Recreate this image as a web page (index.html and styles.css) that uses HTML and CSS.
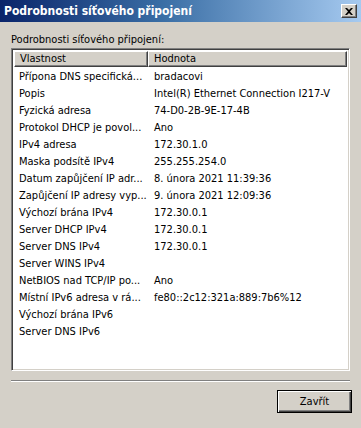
FILE: index.html
```html
<!DOCTYPE html>
<html lang="cs">

<head>
    <meta charset="UTF-8">
    <meta name="viewport" content="width=device-width, initial-scale=1.0">
    <title>Podrobnosti síťového připojení</title>
    <link rel="stylesheet" href="styles.css">
</head>

<body>
    <div class="window">
        <div class="titlebar">
            <span class="title">Podrobnosti síťového připojení</span>
            <span class="close-btn">
                <svg width="8" height="7" viewBox="0 0 8 7">
                    <path d="M0 0h2l2 2 2-2h2L5 3.5 8 7H6L4 5 2 7H0l3-3.5z" fill="#000"/>
                </svg>
            </span>
        </div>

        <div class="content">
            <div class="caption">Podrobnosti síťového připojení:</div>

            <div class="listbox">
                <div class="list-header">
                    <div class="col-head col-prop">Vlastnost</div>
                    <div class="col-head col-value">Hodnota</div>
                </div>
                <div class="list-body">
                    <div class="row"><span class="prop">Přípona DNS specifická...</span><span class="val">bradacovi</span></div>
                    <div class="row"><span class="prop">Popis</span><span class="val">Intel(R) Ethernet Connection I217-V</span></div>
                    <div class="row"><span class="prop">Fyzická adresa</span><span class="val">74-D0-2B-9E-17-4B</span></div>
                    <div class="row"><span class="prop">Protokol DHCP je povol...</span><span class="val">Ano</span></div>
                    <div class="row"><span class="prop">IPv4 adresa</span><span class="val">172.30.1.0</span></div>
                    <div class="row"><span class="prop">Maska podsítě IPv4</span><span class="val">255.255.254.0</span></div>
                    <div class="row"><span class="prop">Datum zapůjčení IP adr...</span><span class="val">8. února 2021 11:39:36</span></div>
                    <div class="row"><span class="prop">Zapůjčení IP adresy vyp...</span><span class="val">9. února 2021 12:09:36</span></div>
                    <div class="row"><span class="prop">Výchozí brána IPv4</span><span class="val">172.30.0.1</span></div>
                    <div class="row"><span class="prop">Server DHCP IPv4</span><span class="val">172.30.0.1</span></div>
                    <div class="row"><span class="prop">Server DNS IPv4</span><span class="val">172.30.0.1</span></div>
                    <div class="row"><span class="prop">Server WINS IPv4</span><span class="val"></span></div>
                    <div class="row"><span class="prop">NetBIOS nad TCP/IP po...</span><span class="val">Ano</span></div>
                    <div class="row"><span class="prop">Místní IPv6 adresa v rá...</span><span class="val">fe80::2c12:321a:889:7b6%12</span></div>
                    <div class="row"><span class="prop">Výchozí brána IPv6</span><span class="val"></span></div>
                    <div class="row"><span class="prop">Server DNS IPv6</span><span class="val"></span></div>
                </div>
            </div>

            <div class="separator"></div>

            <div class="buttons">
                <button class="btn" type="button">Zavřít</button>
            </div>
        </div>
    </div>
</body>

</html>
```

FILE: styles.css
```css
* {
    margin: 0;
    padding: 0;
    box-sizing: border-box;
}

body {
    font-family: 'DejaVu Sans Condensed', 'DejaVu Sans', sans-serif;
    font-size: 11px;
    color: #000;
    background: #d4d0c8;
}

.window {
    width: 361px;
    height: 428px;
    background: #d4d0c8;
    display: flex;
    flex-direction: column;
}

.titlebar {
    height: 22px;
    display: flex;
    align-items: center;
    justify-content: space-between;
    padding: 0 4px 0 4px;
    background: linear-gradient(90deg, #0a246a 0%, #3a6ea5 45%, #a6caf0 100%);
}

.title {
    color: #fff;
    font-weight: bold;
    font-size: 12px;
    font-family: 'DejaVu Sans Condensed', 'DejaVu Sans', sans-serif;
}

.close-btn {
    width: 16px;
    height: 14px;
    display: flex;
    align-items: center;
    justify-content: center;
    background: #d4d0c8;
    border-top: 1px solid #fff;
    border-left: 1px solid #fff;
    border-right: 1px solid #404040;
    border-bottom: 1px solid #404040;
    box-shadow: inset -1px -1px 0 #808080;
}

.content {
    flex: 1;
    display: flex;
    flex-direction: column;
    padding: 10px 11px 0 11px;
}

.caption {
    height: 16px;
    line-height: 16px;
}

.listbox {
    height: 323px;
    background: #fff;
    border-top: 1px solid #808080;
    border-left: 1px solid #808080;
    border-right: 1px solid #fff;
    border-bottom: 1px solid #fff;
    box-shadow: inset 1px 1px 0 #404040, inset -1px -1px 0 #d4d0c8;
    padding: 2px 2px 2px 2px;
    overflow: hidden;
}

.list-header {
    display: flex;
    height: 16px;
}

.col-head {
    height: 16px;
    line-height: 14px;
    padding-left: 5px;
    background: #d4d0c8;
    border-top: 1px solid #fff;
    border-left: 1px solid #fff;
    border-right: 1px solid #404040;
    border-bottom: 1px solid #404040;
    box-shadow: inset -1px -1px 0 #808080;
    white-space: nowrap;
}

.col-prop {
    width: 134px;
}

.col-value {
    flex: 1;
}

.list-body {
    padding-top: 1px;
}

.row {
    display: flex;
    height: 17px;
    line-height: 17px;
    white-space: nowrap;
}

.prop {
    width: 134px;
    padding-left: 5px;
    overflow: hidden;
}

.val {
    padding-left: 6px;
}

.separator {
    margin-top: 9px;
    height: 2px;
    border-top: 1px solid #808080;
    border-bottom: 1px solid #fff;
}

.buttons {
    display: flex;
    justify-content: flex-end;
    padding-top: 8px;
}

.btn {
    width: 75px;
    height: 23px;
    margin-right: -2px;
    font-family: inherit;
    font-size: 11px;
    color: #000;
    background: #d4d0c8;
    border: 1px solid #000;
    box-shadow: inset 1px 1px 0 #fff, inset -1px -1px 0 #404040, inset -2px -2px 0 #808080;
}
```
